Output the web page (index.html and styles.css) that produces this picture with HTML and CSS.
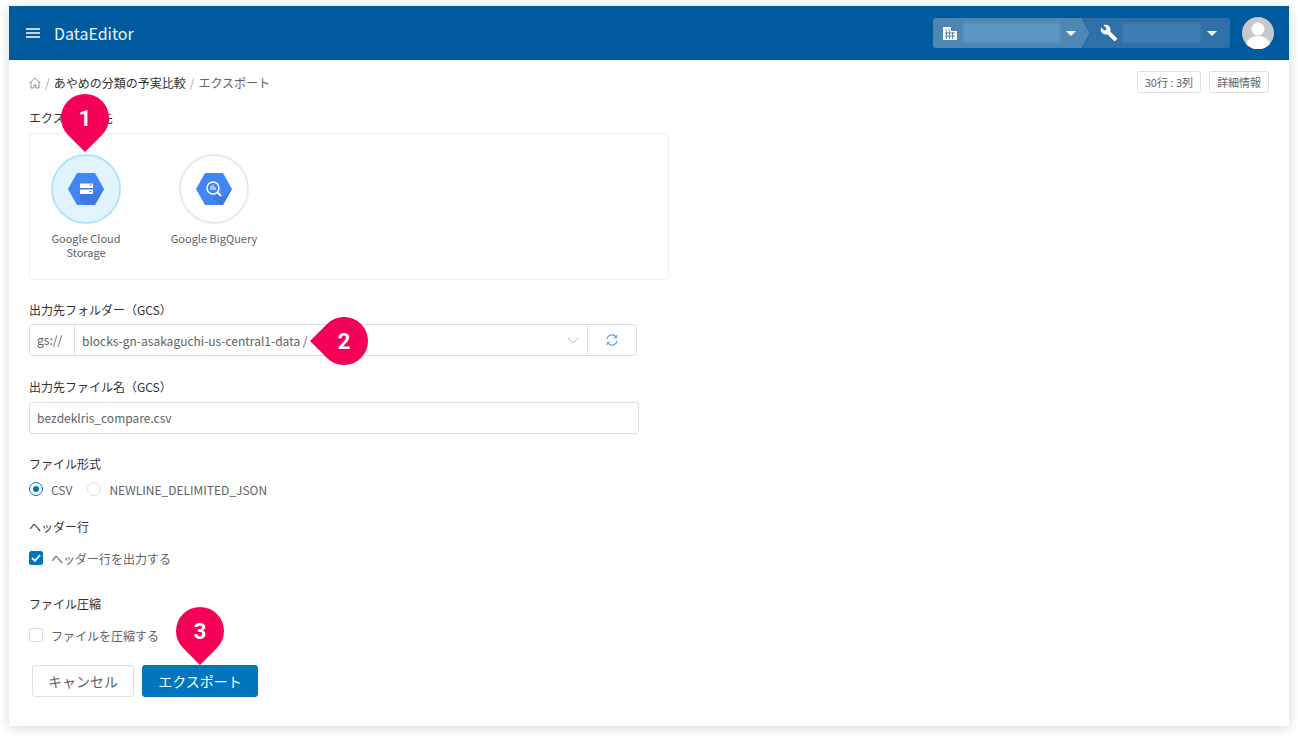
FILE: index.html
```html
<!DOCTYPE html>
<html lang="ja">
<head>
<meta charset="utf-8">
<title>DataEditor</title>
<link rel="stylesheet" href="styles.css">
</head>
<body>
<div class="card">
  <header class="topbar">
    <svg class="menu-icon" width="14" height="10" viewBox="0 0 14 10"><path d="M0 1h14M0 5h14M0 9h14" stroke="#fff" stroke-width="1.4"/></svg>
    <span class="app-title">DataEditor</span>
    <div class="switcher">
      <div class="sw-a">
        <svg width="14" height="13" viewBox="0 0 14 13"><path fill="#fff" d="M0 0h8v4h6v9H0z"/><path stroke="#5288b5" stroke-width="1" d="M2 3h1.5M5 3h1.500M2 6h10M2 9h10M3.500 4v8M6.500 4v8M9.500 5v7"/></svg>
        <span class="blur blur-a"></span>
        <span class="caret"></span>
      </div>
      <svg class="chev" width="9" height="30" viewBox="0 0 9 30"><path d="M0 0l8 15-8 15z" fill="#4e86b4"/><path d="M0 0l8 15-8 15" fill="none" stroke="#1f6aa3" stroke-width="1"/></svg>
      <div class="sw-b">
        <svg width="18" height="18" viewBox="0 0 24 24"><path fill="#fff" d="M22.700 19l-9.100-9.100c.9-2.300.4-5-1.500-6.900-2-2-5-2.400-7.400-1.300L9 6 6 9 1.600 4.700C.4 7.100.9 10.100 2.900 12.100c1.900 1.900 4.600 2.400 6.900 1.500l9.100 9.100c.4.400 1 .4 1.400 0l2.300-2.300c.5-.4.500-1.100.1-1.400z"/></svg>
        <span class="blur blur-b"></span>
        <span class="caret"></span>
      </div>
    </div>
    <svg class="avatar" width="32" height="32" viewBox="0 0 32 32"><circle cx="16" cy="16" r="16" fill="#c8c8c8"/><circle cx="16" cy="12" r="6.500" fill="#fff"/><path d="M4 27c2-6 7-8 12-8s10 2 12 8a16 16 0 0 1-24 0z" fill="#fff"/></svg>
  </header>

  <main class="content">
    <div class="crumb-row">
      <nav class="crumbs">
        <svg width="12" height="12" viewBox="0 0 12 12"><path d="M.5 6L6 1l5.500 5M2 5v6h3V8h2v3h3V5" fill="none" stroke="#888" stroke-width=".9"/></svg>
        <span class="sep">/</span>
        <span class="crumb-link">あやめの分類の予実比較</span>
        <span class="sep">/</span>
        <span class="crumb-now">エクスポート</span>
      </nav>
      <div class="tags">
        <span class="tag">30行 : 3列</span>
        <span class="tag">詳細情報</span>
      </div>
    </div>

    <div class="field-label first">エクスポート先</div>
    <div class="target-box">
      <div class="target">
        <div class="target-circle selected">
          <svg width="36" height="32" viewBox="0 0 36 32"><path d="M9 0h18l9 16-9 16H9L0 16z" fill="#4285f4"/><path d="M12 12h13v8l11-4-9 16H17l-5-5z" fill="#3a6fd0" opacity=".55"/><path d="M12 10.500h13v4.500H12zM12 16.500h13V21H12z" fill="#fff"/><path d="M21.500 12h2M21.500 18.500h2" stroke="#4285f4" stroke-width="1.200"/></svg>
        </div>
        <div class="target-name">Google Cloud Storage</div>
      </div>
      <div class="target">
        <div class="target-circle">
          <svg width="36" height="32" viewBox="0 0 36 32"><path d="M9 0h18l9 16-9 16H9L0 16z" fill="#4285f4"/><path d="M22 20l4 4 10-8-9 16h-4l-6-7z" fill="#3a6fd0" opacity=".55"/><circle cx="17" cy="15" r="6" fill="none" stroke="#fff" stroke-width="1.500"/><path d="M15 13v4M17 11.500V17M19 14v3" stroke="#fff" stroke-width="1.100"/><path d="M21.500 19.500L25 23" stroke="#fff" stroke-width="2"/></svg>
        </div>
        <div class="target-name">Google BigQuery</div>
      </div>
    </div>

    <div class="field-label folder-label">出力先フォルダー（GCS）</div>
    <div class="input-group">
      <span class="prefix">gs://</span>
      <span class="path">blocks-gn-asakaguchi-us-central1-data /</span>
      <svg class="select-arrow" width="12" height="7" viewBox="0 0 12 7"><path d="M.5.5L6 6 11.500.5" fill="none" stroke="#c4c4c4"/></svg>
      <button class="refresh" type="button" aria-label="更新">
        <svg width="12" height="12" viewBox="0 0 12 12"><path d="M1 5a5 5 0 0 1 9-2M11 7a5 5 0 0 1-9 2" fill="none" stroke="#409eff" stroke-width="1.100"/><path d="M10.800.8v3h-3M1.200 11.200v-3h3" fill="none" stroke="#409eff" stroke-width=".9"/></svg>
      </button>
    </div>

    <div class="field-label file-label">出力先ファイル名（GCS）</div>
    <div class="text-input">bezdeklris_compare.csv</div>

    <div class="field-label format-label">ファイル形式</div>
    <div class="radios">
      <span class="radio on"></span><span class="opt">CSV</span>
      <span class="radio"></span><span class="opt">NEWLINE_DELIMITED_JSON</span>
    </div>

    <div class="field-label header-label">ヘッダー行</div>
    <div class="check-row header-check">
      <span class="check on"><svg width="10" height="8" viewBox="0 0 10 8"><path d="M1 4l3 2.800L9 1" fill="none" stroke="#fff" stroke-width="1.800"/></svg></span>
      <span class="opt">ヘッダー行を出力する</span>
    </div>

    <div class="field-label zip-label">ファイル圧縮</div>
    <div class="check-row zip-check">
      <span class="check"></span>
      <span class="opt">ファイルを圧縮する</span>
    </div>

    <div class="actions">
      <button class="btn" type="button">キャンセル</button>
      <button class="btn primary" type="button">エクスポート</button>
    </div>
  </main>

  <div class="pin pin-down pin-1"><span>1</span></div>
  <div class="pin pin-left pin-2"><span>2</span></div>
  <div class="pin pin-down pin-3"><span>3</span></div>
</div>
</body>
</html>
```
FILE: styles.css
```css
* { box-sizing: border-box; }
html, body { margin: 0; height: 100%; }
body {
  background: #fff;
  padding: 6px 9px 12px;
  font-family: "Noto Sans CJK JP", "Noto Sans", sans-serif;
  font-size: 12px;
  color: #303133;
  overflow: hidden;
}
.card {
  position: relative;
  height: 720px;
  background: #fff;
  box-shadow: 0 2px 12px rgba(0, 0, 0, .16);
}
.topbar {
  height: 54px;
  background: #005a9e;
  display: flex;
  align-items: center;
  padding: 0 15px 0 17px;
  color: #fff;
}
.menu-icon { flex: none; }
.app-title { margin-left: 14px; font-size: 16px; flex: 1; color: #eef5fb; }
.switcher { display: flex; height: 30px; margin-top: 0; border-radius: 3px; overflow: hidden; background: #2f70a9; }
.sw-a {
  width: 149px; display: flex; align-items: center; padding-left: 10px; background: #4e86b4;
}
.chev { flex: none; }
.sw-b { width: 139px; display: flex; align-items: center; padding-left: 9px; }
.blur { display: block; height: 20px; filter: blur(1px); }
.blur-a { width: 97px; margin-left: 6px; background: #5f95c1; }
.blur-b { width: 79px; margin-left: 4px; background: #3f7db1; }
.caret {
  margin-left: 6px;
  width: 0; height: 0;
  border-left: 5px solid transparent;
  border-right: 5px solid transparent;
  border-top: 5px solid #fff;
}
.avatar { margin-left: 12px; }

.content { padding: 0 20px; }
.crumb-row { display: flex; justify-content: space-between; align-items: center; height: 44px; }
.crumbs { display: flex; align-items: center; gap: 4px; }
.crumbs svg { margin-top: 2px; }
.sep { color: #a8abb2; }
.crumb-link { color: #303133; }
.crumb-now { color: #606266; }
.tags { display: flex; gap: 8px; }
.tag {
  height: 22px; padding: 0 7px; border: 1px solid #dcdfe6; border-radius: 3px;
  font-size: 11px; line-height: 20px; color: #606266;
}
.field-label { line-height: 18px; font-size: 12px; color: #303133; }
.first { margin-top: 5px; }
.target-box {
  width: 640px; height: 147px; margin-top: 6px;
  border: 1px solid #ebeef5; border-radius: 4px;
  padding: 20px 0 0 6px;
  display: flex; gap: 28px;
}
.target { width: 100px; display: flex; flex-direction: column; align-items: center; }
.target-circle {
  width: 70px; height: 70px; border-radius: 50%;
  border: 2px solid #e6ebf0;
  display: flex; align-items: center; justify-content: center;
}
.target-circle.selected { background: #e1f4fd; border-color: #b3e3fb; }
.target-name { margin-top: 7px; font-size: 11px; line-height: 14px; color: #606266; text-align: center; width: 90px; }
.folder-label { margin-top: 21px; }
.input-group {
  width: 608px; height: 32px; margin-top: 5px;
  border: 1px solid #dcdfe6; border-radius: 3px;
  display: flex; align-items: center; color: #606266;
}
.prefix { width: 45px; height: 100%; line-height: 30px; padding-left: 7px; border-right: 1px solid #dcdfe6; flex: none; }
.path { flex: 1; padding-left: 7px; }
.select-arrow { margin-right: 8px; }
.refresh {
  width: 49px; height: 100%; padding: 0; background: none; border: 0; border-left: 1px solid #dcdfe6;
  display: flex; align-items: center; justify-content: center;
}
.file-label { margin-top: 22px; }
.text-input {
  width: 610px; height: 32px; margin-top: 6px; padding-left: 7px;
  border: 1px solid #dcdfe6; border-radius: 3px;
  line-height: 30px; color: #606266;
}
.format-label { margin-top: 21px; }
.radios { display: flex; align-items: center; height: 18px; margin-top: 7px; color: #606266; }
.radio { width: 14px; height: 14px; border-radius: 50%; border: 1px solid #dcdfe6; display: block; position: relative; flex: none; }
.radio.on { border-color: #0076be; }
.radio.on::after {
  content: ""; position: absolute; left: 3px; top: 3px; width: 6px; height: 6px; border-radius: 50%; background: #0076be;
}
.opt { margin-left: 8px; color: #606266; }
.radios .opt:nth-child(2) { margin-right: 15px; }
.header-label { margin-top: 20px; }
.check-row { display: flex; align-items: center; height: 18px; }
.header-check { margin-top: 13px; }
.check {
  width: 14px; height: 14px; border: 1px solid #dcdfe6; border-radius: 2px; display: flex; align-items: center; justify-content: center; flex: none;
}
.check.on { background: #0076be; border-color: #0076be; }
.zip-label { margin-top: 28px; }
.zip-check { margin-top: 13px; }
.actions { display: flex; gap: 8px; margin-top: 21px; padding-left: 3px; }
.btn {
  height: 32px; width: 102px; padding: 0; border: 1px solid #dcdfe6; border-radius: 3px; background: #fff;
  font: 14px "Noto Sans CJK JP", sans-serif; color: #606266;
}
.primary { width: 116px; background: #0076be; border-color: #0076be; color: #fff; }

.pin {
  position: absolute; width: 48px; height: 48px;
  display: flex; align-items: center; justify-content: center;
  color: #fff; font: 700 22px "Roboto", sans-serif;
}
.pin::before { content: ""; position: absolute; inset: 0; background: #f50057; }
.pin span { position: relative; }
.pin-down::before { border-radius: 50% 50% 0 50%; transform: rotate(45deg); }
.pin-left::before { border-radius: 0 50% 50% 50%; transform: rotate(-45deg); }
.pin-1 { left: 52px; top: 88px; }
.pin-2 { left: 311px; top: 311px; }
.pin-3 { left: 167px; top: 601px; }
```
